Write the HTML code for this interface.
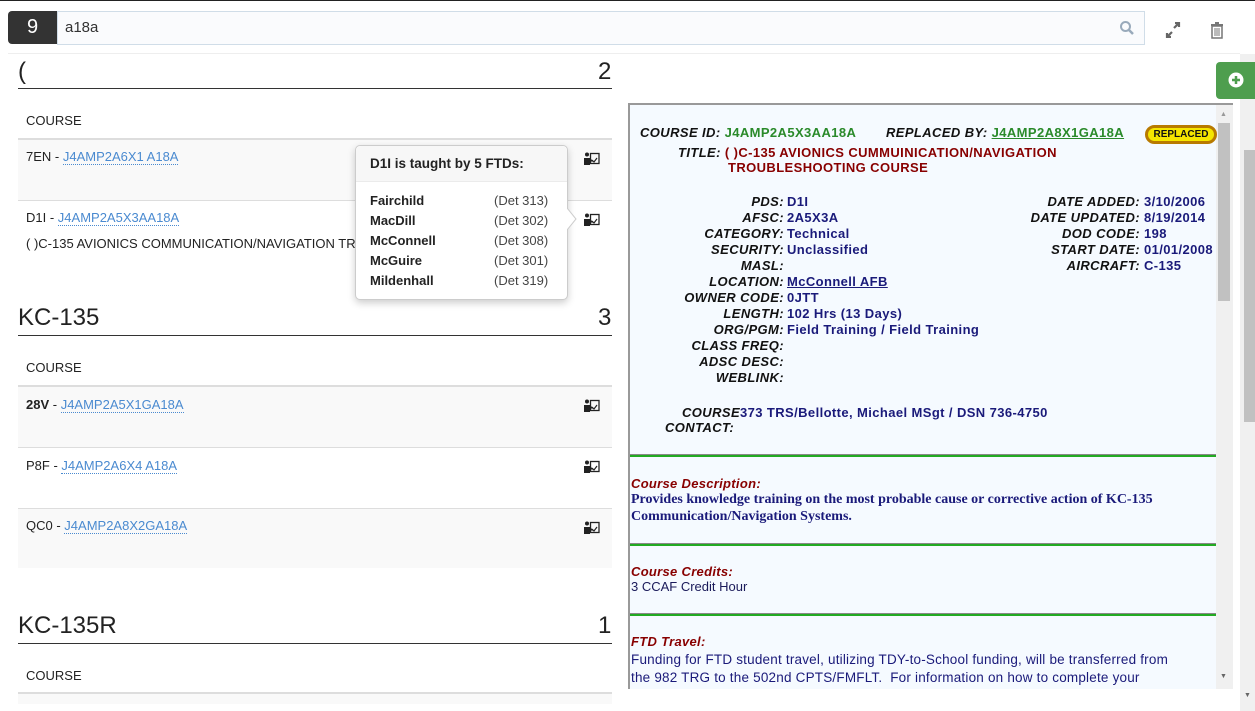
<!DOCTYPE html>
<html><head><meta charset="utf-8"><style>
*{margin:0;padding:0;box-sizing:border-box}
html{width:1255px;height:711px;overflow:hidden}
body{width:1255px;height:711px;overflow:hidden;background:#fff;font-family:"Liberation Sans",Arial,sans-serif;position:relative;color:#333}
.a{position:absolute;white-space:nowrap}
.badge{left:8px;top:11px;width:49px;height:33px;background:#333;border-radius:4px 0 0 4px;color:#fff;font-size:20px;text-align:center;line-height:33px}
.inp{left:57px;top:11px;width:1088px;height:34px;border:1px solid #d0dde8;background:#fafbfd;font-size:15px;line-height:32px;padding-left:7px;color:#333}
.h{font-size:24px;color:#222}
.hl{height:1px;background:#333;width:594px;left:18px}
.ch{font-size:13px;color:#222;left:26px}
.gl{height:2px;background:#ddd;width:594px;left:18px}
.row{left:18px;width:594px;height:60px;border-top:1px solid #ddd}
.rt{font-size:13px;color:#222;left:26px}
.rt a{color:#4a8ad0;text-decoration:none;border-bottom:1px dotted #4a8ad0}
.ic{width:16px;height:14px}
.pop{left:355px;top:145px;width:213px;height:155px;border:1px solid #ccc;border-radius:5px;background:#fff;box-shadow:0 3px 8px rgba(0,0,0,.2)}
.pop .hd{height:36px;background:#f7f7f7;border-bottom:1px solid #ebebeb;border-radius:5px 5px 0 0;font-weight:bold;font-size:13.5px;line-height:36px;padding-left:14px;color:#222}
.pr{position:absolute;left:14px;font-size:13px;font-weight:bold;color:#222}
.pr span{position:absolute;left:124px;font-weight:normal;color:#444}
.rp{left:628px;top:103px;width:605px;height:586px;border-top:2px solid #999;border-left:2px solid #999;background:#f5faff;overflow:hidden}
.lb{font-style:italic;font-weight:bold;font-size:13px;letter-spacing:.4px;color:#111;text-align:right}
.v{font-weight:bold;font-size:13px;letter-spacing:.4px;color:#1a1a7a}
.sep{left:0;width:586px;height:3px;border-top:1px solid #888;background:#2a2;height:3px}
.st{font-style:italic;font-weight:bold;font-size:13px;letter-spacing:.3px;color:#800}
</style></head><body>
<div class="a" style="left:0;top:0;width:1255px;height:1px;background:#222"></div>
<div class="a badge">9</div>
<div class="a inp">a18a</div>
<svg class="a" style="left:1119px;top:20px" width="16" height="16" viewBox="0 0 16 16"><circle cx="6.5" cy="6.5" r="4.5" fill="none" stroke="#9ab" stroke-width="2"/><path d="M10 10l4 4" stroke="#9ab" stroke-width="2.5"/></svg>
<svg class="a" style="left:1164px;top:22px" width="18" height="16" viewBox="0 0 18 16"><path d="M10 6l5-5M11 1h4v4M8 10l-5 5M3 11v4h4" stroke="#666" stroke-width="2.2" fill="none"/></svg>
<svg class="a" style="left:1210px;top:21px" width="14" height="18" viewBox="0 0 14 18"><rect x="1" y="3" width="12" height="2" fill="#777"/><rect x="5" y="1" width="4" height="2" fill="#777"/><path d="M2 5h10v12H2z" fill="none" stroke="#777" stroke-width="1.5"/><path d="M5 7v8M7 7v8M9 7v8" stroke="#777"/></svg>
<div class="a" style="left:8px;top:53px;width:1232px;height:1px;background:#eee"></div>
<div class="a" style="left:1240px;top:54px;width:15px;height:657px;background:#f0f0f0"></div>
<div class="a" style="left:1244px;top:150px;width:11px;height:272px;background:#c1c1c1"></div>
<div class="a" style="left:1216px;top:62px;width:39px;height:37px;background:#4e9e4e;border-radius:4px 0 0 4px"></div>
<svg class="a" style="left:1228px;top:72px" width="16" height="16"><circle cx="8" cy="8" r="7.5" fill="#fff"/><path d="M8 4v8M4 8h8" stroke="#4e9e4e" stroke-width="2.5"/></svg>

<div class="a h" style="left:18px;top:58px">(</div><div class="a h" style="left:598px;top:58px">2</div>
<div class="a hl" style="top:88px"></div>
<div class="a ch" style="top:113px">COURSE</div>
<div class="a gl" style="top:138px"></div>
<div class="a row" style="top:140px;background:#f9f9f9;border-top:none"></div>
<div class="a rt" style="top:149px">7EN - <a>J4AMP2A6X1 A18A</a></div>
<div class="a row" style="top:200px"></div>
<div class="a rt" style="top:210px">D1I - <a>J4AMP2A5X3AA18A</a></div>
<div class="a rt" style="top:236px">( )C-135 AVIONICS COMMUNICATION/NAVIGATION TR</div>

<div class="a h" style="left:18px;top:304px">KC-135</div><div class="a h" style="left:598px;top:304px">3</div>
<div class="a hl" style="top:335px"></div>
<div class="a ch" style="top:360px">COURSE</div>
<div class="a gl" style="top:385px"></div>
<div class="a row" style="top:387px;background:#f9f9f9;border-top:none"></div>
<div class="a rt" style="top:397px"><b>28V</b> - <a>J4AMP2A5X1GA18A</a></div>
<div class="a row" style="top:447px"></div>
<div class="a rt" style="top:458px">P8F - <a>J4AMP2A6X4 A18A</a></div>
<div class="a row" style="top:508px;background:#f9f9f9"></div>
<div class="a rt" style="top:518px">QC0 - <a>J4AMP2A8X2GA18A</a></div>

<div class="a h" style="left:18px;top:612px">KC-135R</div><div class="a h" style="left:598px;top:612px">1</div>
<div class="a hl" style="top:643px"></div>
<div class="a ch" style="top:668px">COURSE</div>
<div class="a gl" style="top:692px"></div>
<div class="a" style="left:18px;top:694px;width:594px;height:10px;background:#f9f9f9"></div>

<svg width="0" height="0" style="position:absolute"><defs><g id="ti"><circle cx="3" cy="2.5" r="2" fill="#222"/><path d="M0 13V6h6l3 3-1 1-2-2v5z" fill="#222"/><rect x="6.5" y="1.5" width="8.5" height="10" fill="none" stroke="#222" stroke-width="1.3"/><path d="M8 8l2 2 3-4" stroke="#222" fill="none" stroke-width="1.2"/></g></defs></svg>
<svg class="a ic" style="left:584px;top:152px"><use href="#ti"/></svg>
<svg class="a ic" style="left:584px;top:213px"><use href="#ti"/></svg>
<svg class="a ic" style="left:584px;top:399px"><use href="#ti"/></svg>
<svg class="a ic" style="left:584px;top:460px"><use href="#ti"/></svg>
<svg class="a ic" style="left:584px;top:521px"><use href="#ti"/></svg>

<div class="a pop"><div class="hd">D1I is taught by 5 FTDs:</div>
<div class="pr" style="top:47px">Fairchild<span>(Det 313)</span></div>
<div class="pr" style="top:67px">MacDill<span>(Det 302)</span></div>
<div class="pr" style="top:87px">McConnell<span>(Det 308)</span></div>
<div class="pr" style="top:107px">McGuire<span>(Det 301)</span></div>
<div class="pr" style="top:127px">Mildenhall<span>(Det 319)</span></div>
</div>
<svg class="a" style="left:567px;top:208px" width="10" height="22"><path d="M0 0l9 11-9 11" fill="#fff" stroke="#ccc"/></svg>

<div class="a rp">
<div class="a" style="left:586px;top:0;width:17px;height:586px;background:#f0f0f0"></div>
<div class="a" style="left:588px;top:18px;width:12px;height:178px;background:#c1c1c1"></div>
<div class="a" style="left:590px;top:6px;font-size:7px;color:#999">▲</div>
<div class="a" style="left:590px;top:568px;font-size:7px;color:#666">▼</div>

<div class="a" style="left:10px;top:19px"><span class="lb">COURSE ID: </span><span class="v" style="color:#2a8a2a">J4AMP2A5X3AA18A</span></div>
<div class="a" style="left:256px;top:19px"><span class="lb">REPLACED BY: </span><span class="v" style="color:#2a8a2a;text-decoration:underline">J4AMP2A8X1GA18A</span></div>
<div class="a" style="left:515px;top:20px;width:72px;height:19px;border-radius:10px;background:#f5e600;border:3px solid #b87a00;font-weight:bold;font-size:10px;text-align:center;line-height:13px;color:#111">REPLACED</div>
<div class="a" style="left:48px;top:39px"><span class="lb">TITLE: </span><span class="v" style="color:#800">( )C-135 AVIONICS CUMMUINICATION/NAVIGATION</span></div>
<div class="a v" style="left:98px;top:55px;color:#800">TROUBLESHOOTING COURSE</div>

<div class="a" style="left:0;top:89px;width:154px;line-height:16px;text-align:right" >
<div class="lb">PDS:</div><div class="lb">AFSC:</div><div class="lb">CATEGORY:</div><div class="lb">SECURITY:</div><div class="lb">MASL:</div><div class="lb">LOCATION:</div><div class="lb">OWNER CODE:</div><div class="lb">LENGTH:</div><div class="lb">ORG/PGM:</div><div class="lb">CLASS FREQ:</div><div class="lb">ADSC DESC:</div><div class="lb">WEBLINK:</div></div>
<div class="a" style="left:157px;top:89px;line-height:16px">
<div class="v">D1I</div><div class="v">2A5X3A</div><div class="v">Technical</div><div class="v">Unclassified</div><div class="v">&nbsp;</div><div class="v" style="text-decoration:underline">McConnell AFB</div><div class="v">0JTT</div><div class="v">102 Hrs (13 Days)</div><div class="v">Field Training / Field Training</div></div>
<div class="a" style="left:300px;top:89px;width:210px;line-height:16px;text-align:right">
<div class="lb">DATE ADDED:</div><div class="lb">DATE UPDATED:</div><div class="lb">DOD CODE:</div><div class="lb">START DATE:</div><div class="lb">AIRCRAFT:</div></div>
<div class="a" style="left:514px;top:89px;line-height:16px">
<div class="v">3/10/2006</div><div class="v">8/19/2014</div><div class="v">198</div><div class="v">01/01/2008</div><div class="v">C-135</div></div>
<div class="a" style="left:52px;top:299px"><span class="lb">COURSE</span><span class="v">373 TRS/Bellotte, Michael MSgt / DSN 736-4750</span></div>
<div class="a lb" style="left:35px;top:315px">CONTACT:</div>

<div class="a sep" style="top:349px"></div>
<div class="a st" style="left:1px;top:371px">Course Description:</div>
<div class="a" style="left:1px;top:386px;font-family:'Liberation Serif',serif;font-weight:bold;font-size:14px;color:#1a1a7a;line-height:17px;white-space:normal;width:580px">Provides knowledge training on the most probable cause or corrective action of KC-135 Communication/Navigation Systems.</div>
<div class="a sep" style="top:438px"></div>
<div class="a st" style="left:1px;top:459px">Course Credits:</div>
<div class="a" style="left:1px;top:474px;font-size:13px;color:#1a1a5a">3 CCAF Credit Hour</div>
<div class="a sep" style="top:508px"></div>
<div class="a st" style="left:1px;top:529px">FTD Travel:</div>
<div class="a" style="left:1px;top:546px;font-size:13.5px;letter-spacing:.2px;color:#1a1a7a;line-height:18px;white-space:normal;width:555px">Funding for FTD student travel, utilizing TDY-to-School funding, will be transferred from the 982 TRG to the 502nd CPTS/FMFLT.&nbsp; For information on how to complete your</div>
</div>
<div class="a" style="left:1244px;top:692px;font-size:7px;color:#666">▼</div>
</body></html>
